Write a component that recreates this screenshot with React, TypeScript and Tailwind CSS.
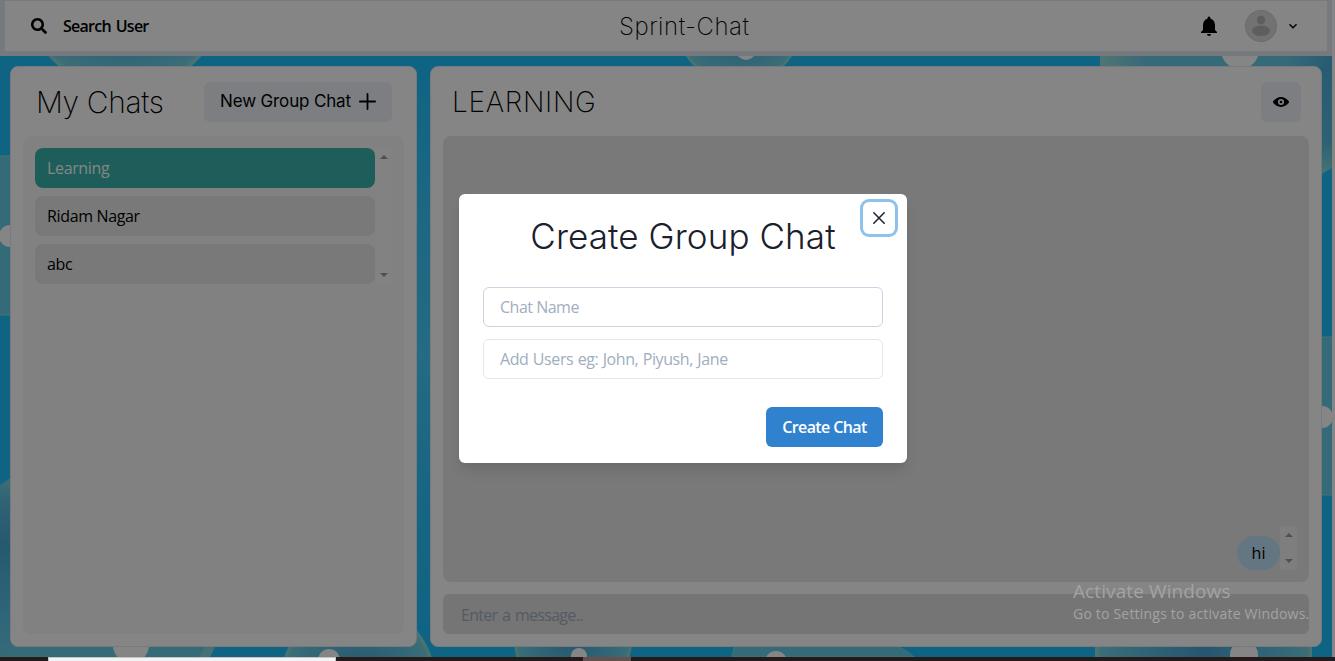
import type { ReactNode } from "react";
import { FaSearch } from "react-icons/fa";

const display = "font-['Inter','Liberation_Sans',sans-serif]";

function Backdrop() {
  return (
    <svg className="absolute inset-0 h-full w-full" viewBox="0 56 1332 601" preserveAspectRatio="none">
      <defs>
        <radialGradient id="bubble">
          <stop offset="0" stopColor="#4aa6d6" />
          <stop offset="0.8" stopColor="#67cbe6" />
          <stop offset="0.94" stopColor="#72d2e2" />
          <stop offset="1" stopColor="#9be0dd" />
        </radialGradient>
        <linearGradient id="mid" x1="0" y1="0" x2="0" y2="1">
          <stop offset="0" stopColor="#1ebffc" />
          <stop offset="0.25" stopColor="#36c6fa" />
          <stop offset="0.5" stopColor="#46cdfc" />
          <stop offset="0.75" stopColor="#2bc2fc" />
          <stop offset="1" stopColor="#1ebffc" />
        </linearGradient>
        <linearGradient id="left" x1="0" y1="0" x2="0" y2="1">
          <stop offset="0" stopColor="#7fd8e2" />
          <stop offset="0.15" stopColor="#5fbde0" />
          <stop offset="0.4" stopColor="#48abd8" />
          <stop offset="0.8" stopColor="#5dc4e8" />
          <stop offset="1" stopColor="#67cbe6" />
        </linearGradient>
        <linearGradient id="corner" x1="0" y1="0" x2="1" y2="0">
          <stop offset="0" stopColor="#9be0dd" />
          <stop offset="0.2" stopColor="#67cbe6" />
          <stop offset="0.8" stopColor="#67cbe6" />
          <stop offset="1" stopColor="#4db0dd" />
        </linearGradient>
        <linearGradient id="fall" x1="0" y1="0" x2="0" y2="1">
          <stop offset="0" stopColor="#4db0dd" />
          <stop offset="0.7" stopColor="#58bade" />
          <stop offset="1" stopColor="#8addde" />
        </linearGradient>
      </defs>
      <rect x="0" y="56" width="1332" height="601" fill="#1ebffc" />
      <rect x="415" y="66" width="17" height="581" fill="url(#mid)" />
      <circle cx="125" cy="-10" r="101" fill="url(#bubble)" />
      <circle cx="739" cy="22" r="63" fill="url(#bubble)" />
      <circle cx="746" cy="50" r="10" fill="#fff" />
      <rect x="1100" y="56" width="232" height="30" fill="url(#corner)" />
      <path d="M1320 66H1332V168L1320 175Z" fill="url(#fall)" />
      <circle cx="1240" cy="50" r="19" fill="#fff" />
      <rect x="-60" y="156" width="120" height="159" rx="12" fill="#67cbe6" stroke="#8addde" />
      <circle cx="10" cy="236" r="11" fill="#fff" />
      <path d="M0 485L20 472V657H0Z" fill="url(#left)" />
      <path d="M10 645H216L210 657H10Z" fill="#67cbe6" />
      <path d="M205 645H216L210 657H199Z" fill="#84d8e2" />
      <circle cx="131" cy="645" r="18" fill="#fff" />
      <circle cx="358" cy="680" r="77" fill="url(#bubble)" />
      <circle cx="329" cy="660" r="11" fill="#fff" />
      <circle cx="573" cy="640" r="59" fill="url(#bubble)" />
      <circle cx="579" cy="656" r="8" fill="#fff" />
      <path d="M736 640H878Q902 646 914 657H732Z" fill="#67cbe6" stroke="#8addde" />
      <circle cx="776" cy="662" r="11" fill="#fff" />
      <circle cx="1204" cy="650" r="109" fill="url(#bubble)" />
      <circle cx="1244" cy="655" r="14" fill="#fff" />
      <path d="M1312 500H1332V657H1312Z" fill="#1ebffc" />
      <rect x="1300" y="337" width="80" height="158" fill="#67cbe6" stroke="#8addde" />
      <circle cx="1322" cy="417" r="11" fill="#fff" />
    </svg>
  );
}

function Arrow({ down = false }: { down?: boolean }) {
  return (
    <svg width="8" height="4" viewBox="0 0 8 4" fill="#9a9a9a">
      {down ? <path d="M0 0H8L4 4Z" /> : <path d="M0 4H8L4 0Z" />}
    </svg>
  );
}

function ChatRow({ active = false, children }: { active?: boolean; children: ReactNode }) {
  return (
    <div
      className={`flex h-10 items-center rounded-lg px-3 text-base ${
        active ? "bg-[#38b2ac] text-white" : "bg-[#e8e8e8] text-black"
      }`}
    >
      <span className="tracking-[-0.35px]">{children}</span>
    </div>
  );
}

function Header() {
  return (
    <header className="relative flex h-14 items-center justify-between border-x-[5px] border-t border-b-[5px] border-[#e2e8f0] bg-white">
      <div className="flex items-center gap-4 pl-[26px]">
        <FaSearch size={16} />
        <span className="text-base font-semibold tracking-[-0.75px] [word-spacing:1.5px]">Search User</span>
      </div>
      <h1 className={`absolute left-[614px] pt-px text-2xl font-extralight tracking-[0.55px] ${display}`}>Sprint-Chat</h1>
      <div className="flex items-center pr-[26px]">
        <svg width="24" height="24" viewBox="0 0 24 24" className="mr-6">
          <path d="M12 22c1.1 0 2-.9 2-2h-4a2 2 0 0 0 2 2zm6-6v-5c0-3.07-1.64-5.64-4.5-6.32V4a1.5 1.5 0 0 0-3 0v.68C7.63 5.36 6 7.92 6 11v5l-2 2v1h16v-1l-2-2z" />
        </svg>
        <svg width="32" height="32" viewBox="0 0 32 32">
          <circle cx="16" cy="16" r="15.7" fill="#dadada" stroke="#c9bcbc" strokeWidth="0.6" />
          <circle cx="16" cy="10" r="4.2" fill="#b4b4b4" />
          <ellipse cx="16" cy="20.7" rx="9" ry="5.2" fill="#b4b4b4" />
        </svg>
        <svg width="16" height="16" viewBox="0 0 24 24" className="ml-2">
          <path d="M16.59 8.59L12 13.17 7.41 8.59 6 10l6 6 6-6z" />
        </svg>
      </div>
    </header>
  );
}

function MyChats() {
  return (
    <section className="relative flex h-[581px] w-[407px] flex-col rounded-lg border border-[#e2e8f0] bg-white px-3 pt-[15px] pb-3">
      <div className="flex h-10 items-center justify-between pr-3 pl-[13px]">
        <h2 className={`text-[30px] font-extralight tracking-[-0.35px] ${display}`}>My Chats</h2>
        <button className={`flex h-10 w-[188px] items-center justify-center gap-2 rounded-md bg-[#edf2f7] text-[17px] ${display}`}>
          <span className="tracking-[-0.15px] whitespace-nowrap">New Group Chat</span>
          <svg width="17" height="17" viewBox="0 0 17 17" stroke="#000" strokeWidth="1.8" strokeLinecap="round" className="-mt-px">
            <path d="M8.5 .9V16.1M.9 8.5H16.1" />
          </svg>
        </button>
      </div>
      <div className="mt-[14px] flex flex-1 items-start rounded-lg bg-[#f8f8f8] p-3">
        <div className="flex w-[340px] flex-col gap-2">
          <ChatRow active>Learning</ChatRow>
          <ChatRow>Ridam Nagar</ChatRow>
          <ChatRow>abc</ChatRow>
        </div>
        <div className="flex h-[136px] w-[17px] flex-col items-center justify-between bg-[#fafafa] py-[7px]">
          <Arrow />
          <Arrow down />
        </div>
      </div>
    </section>
  );
}

function Conversation() {
  return (
    <section className="relative flex h-[581px] w-[892px] flex-col rounded-lg border border-[#e2e8f0] bg-white px-3 pt-[15px] pb-3">
      <div className="flex h-10 items-center justify-between pr-2 pl-[9px]">
        <h2 className={`text-[28px] font-extralight tracking-[0.7px] ${display}`}>LEARNING</h2>
        <button className="flex h-10 w-10 items-center justify-center rounded-md bg-[#edf2f7]">
          <svg width="16" height="16" viewBox="0 0 24 24">
            <path d="M23.432 10.524C20.787 7.614 16.4 4.538 12 4.6 7.6 4.537 3.213 7.615.568 10.524a2.211 2.211 0 0 0 0 2.948C3.182 16.351 7.507 19.4 11.839 19.4h.308c4.347 0 8.671-3.049 11.288-5.929a2.21 2.21 0 0 0-.003-2.947ZM7.4 12A4.6 4.6 0 1 1 12 16.6 4.6 4.6 0 0 1 7.4 12Z" />
            <circle cx="12" cy="12" r="2" />
          </svg>
        </button>
      </div>
      <div className="mt-[14px] flex h-[446px] items-end justify-end rounded-lg bg-[#e8e8e8] p-3">
        <span className="flex h-[34px] w-[43px] items-center justify-center rounded-[20px] bg-[#bee3f8] text-base">hi</span>
        <div className="flex h-11 w-[17px] flex-col items-center justify-between bg-[#f2f2f2] py-[7px]">
          <Arrow />
          <Arrow down />
        </div>
      </div>
      <div className="mt-3 flex h-10 items-center rounded-md bg-[#e0e0e0] pt-0.5 pl-[18px] text-base text-[#a0aec0]">
        <span className="tracking-[-0.7px] [word-spacing:1.2px]">Enter a message..</span>
      </div>
    </section>
  );
}

function GroupDialog() {
  return (
    <div className="relative mt-[194px] ml-[31px] flex h-[269px] w-[448px] flex-col rounded-md bg-white px-6 shadow-[0_10px_15px_-3px_rgba(0,0,0,0.1),0_4px_6px_-2px_rgba(0,0,0,0.05)]">
      <h2 className={`mt-4 text-center text-[35px] leading-[53px] font-light tracking-[0.1px] whitespace-nowrap text-[#1a202c] ${display}`}>
        Create Group Chat
      </h2>
      <button className="absolute top-2 right-3 flex h-8 w-8 items-center justify-center rounded-md shadow-[0_0_0_3px_rgba(66,153,225,0.6)]">
        <svg width="12" height="12" viewBox="0 0 12 12" stroke="#1a202c" strokeWidth="1.5" strokeLinecap="round">
          <path d="M.8.8L11.2 11.2M11.2.8L.8 11.2" />
        </svg>
      </button>
      <div className="mt-6 flex h-10 items-center rounded-md border border-[#cbd5e0] px-4 text-[#a0aec0]">
        <span className="tracking-[-0.5px]">Chat Name</span>
      </div>
      <div className="mt-3 flex h-10 items-center rounded-md border border-[#e2e8f0] px-4 text-[#a0aec0]">
        <span className="tracking-[-0.4px] [word-spacing:0.6px]">Add Users eg: John, Piyush, Jane</span>
      </div>
      <button className="mt-7 flex h-10 w-[117px] items-center justify-center self-end rounded-md bg-[#3182ce] font-semibold tracking-[-0.6px] whitespace-nowrap text-white">
        Create Chat
      </button>
    </div>
  );
}

export default function App() {
  return (
    <div className="relative flex h-[661px] w-[1335px] flex-col overflow-hidden bg-white font-['Open_Sans','Noto_Sans',sans-serif] text-black">
      <div className="w-[1332px]">
        <Header />
        <main className="relative flex h-[601px] justify-between p-[10px]">
          <Backdrop />
          <MyChats />
          <Conversation />
        </main>
      </div>
      <div className="absolute inset-0 flex items-start justify-center bg-black/48">
        <GroupDialog />
      </div>
      <div className="absolute top-[579px] left-[1073px] whitespace-nowrap text-[#a3a3a3]">
        <p className="text-[19px] leading-6 tracking-[0.1px]">Activate Windows</p>
        <p className="pt-px text-sm leading-5 tracking-[0.2px]">Go to Settings to activate Windows.</p>
      </div>
      <footer className="relative flex h-1 bg-[#241a1a]">
        <div className="ml-12 w-72 border border-b-0 border-[#c4c4c4] bg-[#f3f3f3]" />
        <div className="ml-[247px] w-12 bg-[#65504c]" />
      </footer>
    </div>
  );
}
